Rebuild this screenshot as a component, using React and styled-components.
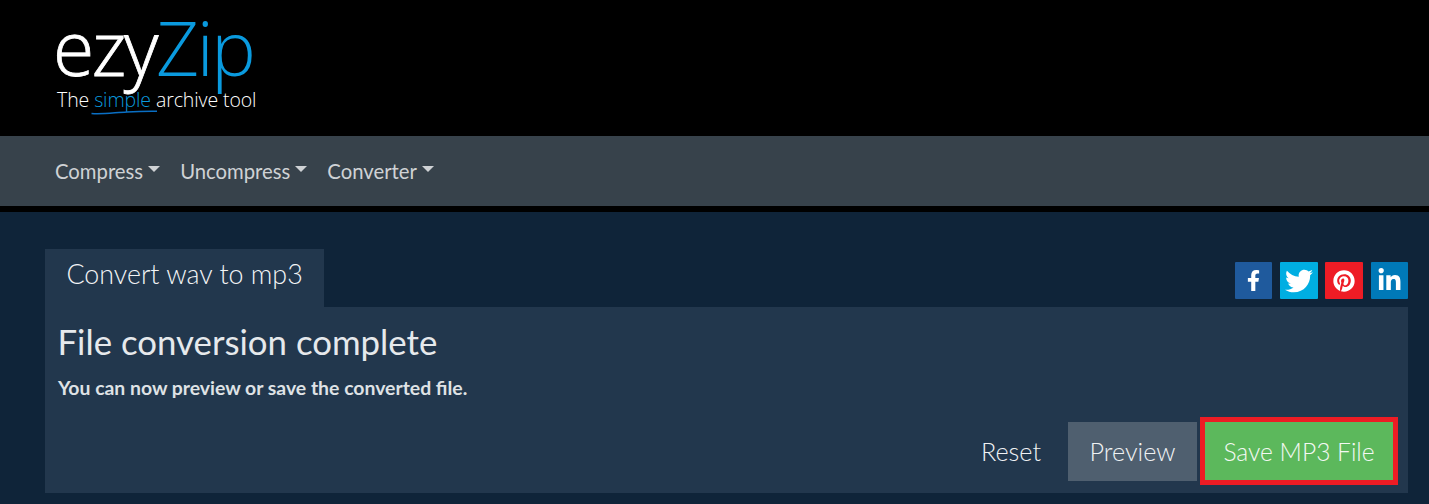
import React from "react";
import styled, { createGlobalStyle } from "styled-components";
import { FaFacebookF, FaTwitter, FaPinterest, FaLinkedinIn } from "react-icons/fa";

const Global = createGlobalStyle`
  html, body { margin: 0; padding: 0; background: #0f2439; }
  body { font-family: Lato, "Liberation Sans", sans-serif; overflow: hidden; }
`;
const Page = styled.div`width: 1429px; height: 504px; overflow: hidden; background: #0f2439;`;
const Header = styled.header`height: 136px; background: #000; padding: 0 0 0 53px; box-sizing: border-box;`;
const Logo = styled.div`width: 230px; font-family: "Open Sans", sans-serif; font-weight: 300; position: relative;`;
const LogoMark = styled.div`font-size: 75px; line-height: 94px; letter-spacing: -2.4px; color: #fff; height: 88px; white-space: nowrap;`;
const Ezy = styled.span`-webkit-text-stroke: 0.8px #fff;`;
const Blue = styled.span`color: #0a9ade;`;
const Tagline = styled.div`font-size: 19.5px; line-height: 24px; color: #fff; margin: 0 0 0 4px; white-space: nowrap; letter-spacing: -0.1px;`;
const Swoosh = styled.svg`position: absolute; left: 38px; top: 109px;`;
const Nav = styled.nav`height: 70px; background: #37424b; display: flex; align-items: center; padding-left: 55px; gap: 20px;`;
const NavItem = styled.div`
  font-size: 20.3px; color: #cfd2d5; display: flex; align-items: center;
  &::after { content: ""; margin-left: 5px; margin-top: -4px; border-top: 6px solid #cfd2d5; border-left: 6px solid transparent; border-right: 6px solid transparent; }
`;
const Divider = styled.div`height: 6px; background: #000;`;
const Main = styled.main`padding: 37px 21px 0 45px;`;
const TabRow = styled.div`display: flex; justify-content: space-between; align-items: flex-end; height: 58px;`;
const Tab = styled.div`width: 279px; height: 58px; box-sizing: border-box; background: #22374d; color: #f2f4f6; font-size: 26.8px; font-weight: 300; line-height: 50px; padding-left: 21.5px; white-space: nowrap;`;
const Socials = styled.div`display: flex; gap: 7.7px; margin-bottom: 8px;`;
const Social = styled.a`width: 37.5px; height: 37px; background: ${p => p.$bg}; border-radius: 1px; color: #fff; display: flex; align-items: center; justify-content: center; font-size: ${p => p.$size}px;`;
const Panel = styled.section`height: 186px; background: #22374d; padding: 14px 12px 0 13px; box-sizing: border-box;`;
const Title = styled.h1`margin: 0; font-size: 34.8px; line-height: 41px; font-weight: 400; color: #e6e9ec; margin-left: -0.5px;`;
const Sub = styled.p`margin: 14px 0 0; font-size: 19.4px; line-height: 24px; font-weight: 700; color: #dfe2e5;`;
const Actions = styled.div`display: flex; justify-content: flex-end; align-items: center; margin-top: 17px; margin-right: -2px;`;
const Btn = styled.button`
  font-family: inherit; font-size: 25.2px; font-weight: 300; color: #f0f2f4; border: 0; height: 59px; padding: 0; width: ${p => p.$w}px; background: ${p => p.$bg || "transparent"};
`;
const Save = styled(Btn)`
  width: 198px; height: 68px; box-sizing: border-box; border: 5px solid #ed1c24; background: #5cb85c; margin-left: 3px; color: #f4f8f4; font-size: 24.6px;
`;

export default function App() {
  return (
    <Page>
      <Global />
      <Header>
        <Logo>
          <LogoMark><Ezy>ezy</Ezy><Blue>Zip</Blue></LogoMark>
          <Tagline>The <Blue>simple</Blue> archive tool</Tagline>
          <Swoosh width="70" height="10" viewBox="0 0 70 10"><path d="M0.5 4.5 C10 5.5 22 3.8 36 3 C46 2.4 56 2.2 66 2.3" fill="none" stroke="#0a6fc4" strokeWidth="1.5" /></Swoosh>
        </Logo>
      </Header>
      <Nav>
        <NavItem>Compress</NavItem>
        <NavItem>Uncompress</NavItem>
        <NavItem>Converter</NavItem>
      </Nav>
      <Divider />
      <Main>
        <TabRow>
          <Tab>Convert wav to mp3</Tab>
          <Socials>
            <Social $bg="#1f5a9d" $size={21}><FaFacebookF /></Social>
            <Social $bg="#00aee2" $size={28}><FaTwitter /></Social>
            <Social $bg="#ee1c25" $size={22}><FaPinterest /></Social>
            <Social $bg="#0079b8" $size={25}><FaLinkedinIn /></Social>
          </Socials>
        </TabRow>
        <Panel>
          <Title>File conversion complete</Title>
          <Sub>You can now preview or save the converted file.</Sub>
          <Actions>
            <Btn $w={114}>Reset</Btn>
            <Btn $w={129} $bg="#4f5f6f">Preview</Btn>
            <Save>Save MP3 File</Save>
          </Actions>
        </Panel>
      </Main>
    </Page>
  );
}
